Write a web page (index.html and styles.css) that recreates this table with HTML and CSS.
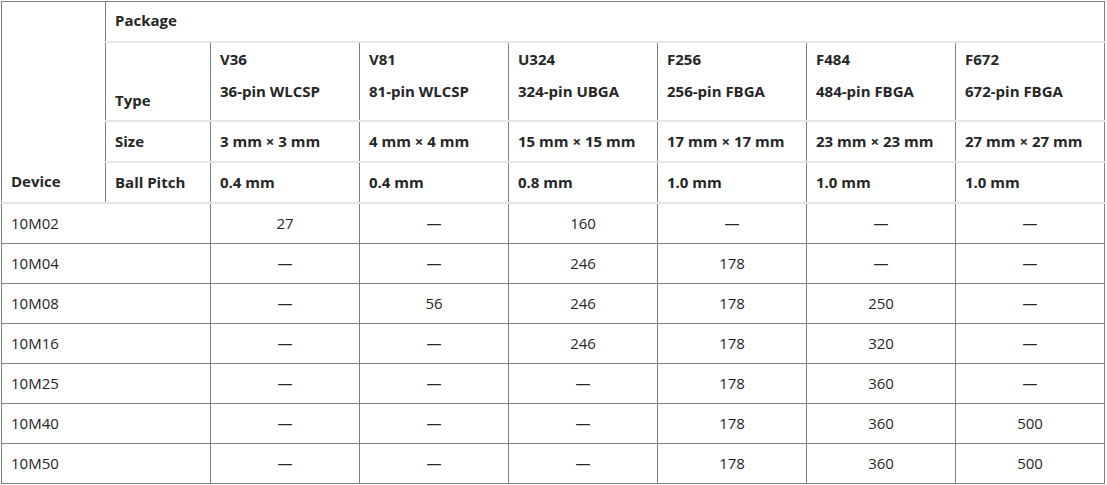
FILE: index.html
```html
<!DOCTYPE html>
<html>
<head>
<meta charset="utf-8">
<link rel="stylesheet" href="styles.css">
</head>
<body>
<table class="pkg">
  <colgroup>
    <col class="c-dev"><col class="c-type">
    <col class="c-pkg"><col class="c-pkg"><col class="c-pkg"><col class="c-pkg"><col class="c-pkg"><col class="c-pkg">
  </colgroup>
  <thead>
    <tr class="r-pkg">
      <th rowspan="4" class="h-dev">Device</th>
      <th colspan="7">Package</th>
    </tr>
    <tr class="r-type">
      <th class="h-label">Type</th>
      <th><p>V36</p><p>36-pin WLCSP</p></th>
      <th><p>V81</p><p>81-pin WLCSP</p></th>
      <th><p>U324</p><p>324-pin UBGA</p></th>
      <th><p>F256</p><p>256-pin FBGA</p></th>
      <th><p>F484</p><p>484-pin FBGA</p></th>
      <th><p>F672</p><p>672-pin FBGA</p></th>
    </tr>
    <tr class="r-std">
      <th>Size</th>
      <th>3 mm × 3 mm</th>
      <th>4 mm × 4 mm</th>
      <th>15 mm × 15 mm</th>
      <th>17 mm × 17 mm</th>
      <th>23 mm × 23 mm</th>
      <th>27 mm × 27 mm</th>
    </tr>
    <tr class="r-std">
      <th>Ball Pitch</th>
      <th>0.4 mm</th>
      <th>0.4 mm</th>
      <th>0.8 mm</th>
      <th>1.0 mm</th>
      <th>1.0 mm</th>
      <th>1.0 mm</th>
    </tr>
  </thead>
  <tbody>
    <tr><td colspan="2">10M02</td><td>27</td><td>—</td><td>160</td><td>—</td><td>—</td><td>—</td></tr>
    <tr><td colspan="2">10M04</td><td>—</td><td>—</td><td>246</td><td>178</td><td>—</td><td>—</td></tr>
    <tr><td colspan="2">10M08</td><td>—</td><td>56</td><td>246</td><td>178</td><td>250</td><td>—</td></tr>
    <tr><td colspan="2">10M16</td><td>—</td><td>—</td><td>246</td><td>178</td><td>320</td><td>—</td></tr>
    <tr><td colspan="2">10M25</td><td>—</td><td>—</td><td>—</td><td>178</td><td>360</td><td>—</td></tr>
    <tr><td colspan="2">10M40</td><td>—</td><td>—</td><td>—</td><td>178</td><td>360</td><td>500</td></tr>
    <tr><td colspan="2">10M50</td><td>—</td><td>—</td><td>—</td><td>178</td><td>360</td><td>500</td></tr>
  </tbody>
</table>
</body>
</html>
```

FILE: styles.css
```css
html, body {
  margin: 0;
  padding: 0;
  background: #fff;
}
body {
  padding: 1px 0 0 1px;
  font-family: "Open Sans", "Noto Sans", sans-serif;
  font-size: 15px;
  color: #262626;
}
.pkg {
  border-collapse: collapse;
  table-layout: fixed;
  width: 1104px;
  border: 1px solid #7f7f7f;
}
.c-dev { width: 104px; }
.c-type { width: 105px; }
.c-pkg { width: 149px; }

.pkg th,
.pkg td {
  border-left: 1px solid #7f7f7f;
  border-right: 1px solid #7f7f7f;
  padding: 0 9px;
  line-height: 20px;
  text-align: left;
}
.pkg th {
  font-weight: 700;
  vertical-align: bottom;
  border-top: 2px solid #e6e6e6;
  border-bottom: 2px solid #e6e6e6;
  height: 38px;
  padding-bottom: 9px;
}
.pkg thead tr:first-child th { border-top: 1px solid #7f7f7f; }
.pkg .h-dev { border-bottom: 2px solid #e6e6e6; }
.pkg .r-pkg th { vertical-align: middle; padding: 0 9px 3px; height: 36px; }
.pkg .r-pkg .h-dev { vertical-align: bottom; padding-bottom: 11px; }
.pkg .r-type th { height: 59px; vertical-align: top; padding-top: 6px; padding-bottom: 12px; }
.pkg .r-type .h-label { vertical-align: bottom; padding-bottom: 10px; }
.pkg .r-type p { margin: 0 0 12px; }
.pkg .r-type p:last-child { margin-bottom: 0; }
.pkg .r-std th { vertical-align: middle; padding-top: 0; padding-bottom: 2px; height: 37px; }

.pkg td {
  border-top: 1px solid #7f7f7f;
  border-bottom: 1px solid #7f7f7f;
  height: 37px;
  text-align: center;
  vertical-align: middle;
  padding: 0 9px 2px;
}
.pkg td:first-child { text-align: left; }
```
